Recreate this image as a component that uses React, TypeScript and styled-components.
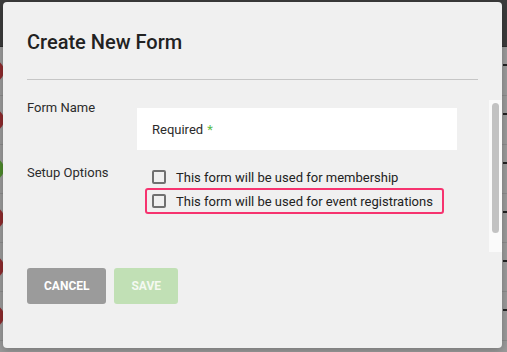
import React from 'react';
import styled, { createGlobalStyle } from 'styled-components';

const GlobalStyle = createGlobalStyle`
  html, body {
    margin: 0;
    padding: 0;
    width: 507px;
    height: 352px;
    overflow: hidden;
    font-family: Roboto, 'Liberation Sans', sans-serif;
  }
`;

const Page = styled.div`
  position: relative;
  width: 507px;
  height: 352px;
  display: flex;
  flex-direction: column;
  background: #9b9b9b;
  overflow: hidden;
`;

const TopBar = styled.div`
  height: 46px;
  flex: none;
  background: #3c3c3c;
  border-bottom: 1px solid #2e2e2e;
`;

const ListRow = styled.div`
  height: 48px;
  flex: none;
  display: flex;
  align-items: center;
  justify-content: space-between;
  border-bottom: 1px solid #8c8c8c;
`;

const Dot = styled.span<{ color: string }>`
  width: 22px;
  height: 22px;
  margin-left: -18px;
  border-radius: 50%;
  background: ${({ color }) => color};
`;

const Dash = styled.span`
  width: 4px;
  height: 2px;
  margin-top: -12px;
  background: #222;
`;

const Modal = styled.div`
  position: absolute;
  top: 2px;
  left: 3px;
  width: 499px;
  height: 346px;
  box-sizing: border-box;
  background: #f0f0f0;
  border-radius: 4px;
  padding: 28px 0 44px 24px;
  display: flex;
  flex-direction: column;
  box-shadow: 0 2px 8px rgba(0, 0, 0, 0.25);
`;

const Title = styled.h2`
  margin: 0 24px 25px 0;
  font-size: 20px;
  line-height: 24px;
  font-weight: 500;
  color: #222;
`;

const Divider = styled.hr`
  margin: 0 24px 20px 0;
  border: none;
  border-top: 1px solid #c6c6c6;
  height: 0;
`;

const Body = styled.div`
  height: 152px;
  flex: none;
  display: flex;
  overflow: hidden;
`;

const BodyContent = styled.div`
  flex: 1;
`;

const ScrollTrack = styled.div`
  width: 13px;
  flex: none;
  box-sizing: border-box;
  padding: 3px 3px 0 3px;
  background: #fafafa;
`;

const ScrollThumb = styled.div`
  height: 130px;
  border-radius: 4px;
  background: #c2c2c2;
`;

const FormGrid = styled.div`
  display: grid;
  grid-template-columns: 110px 320px;
  row-gap: 15px;
`;

const Label = styled.div`
  font-size: 13px;
  line-height: 16px;
  color: #2b2b2b;
`;

const TextInput = styled.div`
  margin-top: 8px;
  height: 42px;
  background: #fff;
  display: flex;
  align-items: center;
  padding-left: 15px;
  font-size: 13px;
  color: #2b2b2b;
`;

const Star = styled.span`
  color: #5dbb46;
  margin-left: 4px;
`;

const Options = styled.div`
  display: flex;
  flex-direction: column;
  align-items: flex-start;
  padding-left: 9px;
`;

const Option = styled.label<{ highlighted?: boolean }>`
  display: inline-flex;
  align-items: center;
  gap: 10px;
  height: 24px;
  padding: 0 10px 0 6px;
  font-size: 13px;
  color: #222;
  white-space: nowrap;
  border-radius: 2px;
  outline: 2px solid ${({ highlighted }) => (highlighted ? '#f6336f' : 'transparent')};
  outline-offset: -1px;
`;

const Box = styled.span`
  width: 14px;
  height: 14px;
  box-sizing: border-box;
  border: 2px solid #707070;
  border-radius: 2px;
  flex: none;
`;

const Actions = styled.div`
  margin-top: 16px;
  display: flex;
  gap: 8px;
`;

const Button = styled.button<{ variant: 'cancel' | 'save' }>`
  height: 36px;
  padding: 0 17px;
  border: none;
  border-radius: 3px;
  font-family: Roboto, 'Liberation Sans', sans-serif;
  font-size: 12px;
  font-weight: 700;
  text-transform: uppercase;
  background: ${({ variant }) => (variant === 'cancel' ? '#9b9b9b' : '#c1e0b5')};
  color: ${({ variant }) => (variant === 'cancel' ? '#fff' : '#f4f9f1')};
`;

const dots = ['#8e2b2e', '#8e2b2e', '#4e8a2c', '#8e2b2e', '#8e2b2e', '#8e2b2e'];

const App = () => {
  return (
    <>
      <GlobalStyle />
      <Page>
        <TopBar />
        {dots.map((c, i) => (
          <ListRow key={i}>
            <Dot color={c} />
            <Dash />
          </ListRow>
        ))}
        <Modal>
          <Title>Create New Form</Title>
          <Divider />
          <Body>
            <BodyContent>
              <FormGrid>
                <Label>Form Name</Label>
                <TextInput>
                  Required<Star>*</Star>
                </TextInput>
                <Label>Setup Options</Label>
                <Options>
                  <Option>
                    <Box />
                    This form will be used for membership
                  </Option>
                  <Option highlighted>
                    <Box />
                    This form will be used for event registrations
                  </Option>
                </Options>
              </FormGrid>
            </BodyContent>
            <ScrollTrack>
              <ScrollThumb />
            </ScrollTrack>
          </Body>
          <Actions>
            <Button variant="cancel">Cancel</Button>
            <Button variant="save">Save</Button>
          </Actions>
        </Modal>
      </Page>
    </>
  );
};

export default App;
